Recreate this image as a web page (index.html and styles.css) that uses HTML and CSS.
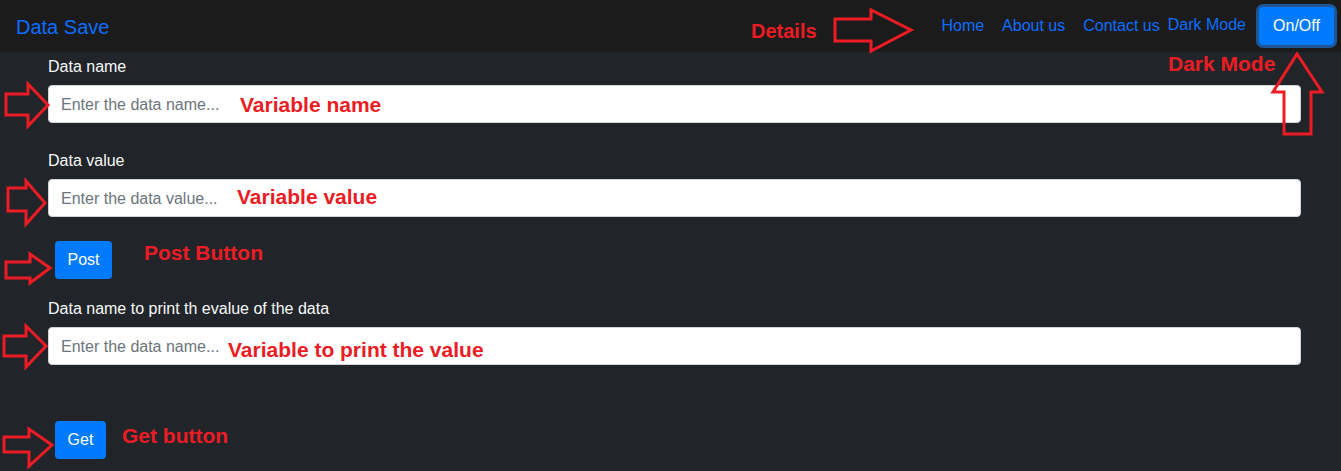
FILE: index.html
```html
<!DOCTYPE html>
<html lang="en">
<head>
<meta charset="utf-8">
<title>Data Save</title>
<link rel="stylesheet" href="styles.css">
</head>
<body>
<nav class="navbar">
  <a class="brand" href="#">Data Save</a>
  <ul class="nav">
    <li><a class="nav-link" href="#">Home</a></li>
    <li><a class="nav-link" href="#">About us</a></li>
    <li><a class="nav-link" href="#">Contact us</a></li>
  </ul>
  <span class="mode-label">Dark Mode</span>
  <button class="btn btn-toggle" type="button">On/Off</button>
</nav>

<main class="content">
  <div class="group">
    <label class="label" for="name">Data name</label>
    <input class="input" id="name" type="text" placeholder="Enter the data name...">
  </div>
  <div class="group">
    <label class="label" for="value">Data value</label>
    <input class="input" id="value" type="text" placeholder="Enter the data value...">
  </div>
  <button class="btn btn-post" type="button">Post</button>
  <div class="group group-get">
    <label class="label" for="print">Data name to print th evalue of the data</label>
    <input class="input" id="print" type="text" placeholder="Enter the data name...">
  </div>
  <button class="btn btn-get" type="button">Get</button>
</main>

<div class="annotations" aria-hidden="true">
  <svg class="arrows" width="1341" height="471" viewBox="0 0 1341 471">
    <g fill="none" stroke="#ed1c24" stroke-width="3" stroke-linejoin="miter">
      <polygon points="835,19 871,19 871,10 911,30 871,51 871,41 835,41"/>
      <polygon points="1297,54 1322,92 1311,92 1311,134 1284,134 1284,92 1273,92"/>
      <polygon points="6,94 28,94 28,84 48,105 28,126 28,115 6,115"/>
      <polygon points="8,188 26,188 26,181 45,203 26,224 26,211 8,211"/>
      <polygon points="6,262 30,262 30,254 50,268 30,283 30,278 6,278"/>
      <polygon points="4,336 26,336 26,326 46,346 26,367 26,356 4,356"/>
      <polygon points="4,437 29,437 29,429 52,445 29,466 29,452 4,452"/>
    </g>
  </svg>
  <span class="note note-details">Details</span>
  <span class="note note-dark">Dark Mode</span>
  <span class="note note-name">Variable name</span>
  <span class="note note-value">Variable value</span>
  <span class="note note-post">Post Button</span>
  <span class="note note-print">Variable to print the value</span>
  <span class="note note-get">Get button</span>
</div>
</body>
</html>
```

FILE: styles.css
```css
* {
  box-sizing: border-box;
}

html, body {
  margin: 0;
  padding: 0;
}

body {
  position: relative;
  width: 1341px;
  height: 471px;
  overflow: hidden;
  background: #212529;
  color: #f8f9fa;
  font-family: "Liberation Sans", Arial, sans-serif;
  font-size: 16px;
  line-height: 24px;
}

.navbar {
  display: flex;
  align-items: center;
  height: 52px;
  padding: 0 7px 0 16px;
  background: #1b1b1b;
}

.brand {
  color: #0d6efd;
  font-size: 20px;
  line-height: 30px;
  text-decoration: none;
  margin-top: 2px;
}

.nav {
  display: flex;
  list-style: none;
  margin: 0 0 0 auto;
  padding: 0;
  gap: 2px;
}

.nav-link {
  display: block;
  padding: 0 8px;
  color: #0d6efd;
  text-decoration: none;
}

.mode-label {
  color: #0d6efd;
  margin: 0 13px 2px 0;
}

.btn {
  display: inline-block;
  height: 38px;
  padding: 6px 12px;
  border: 0;
  border-radius: 4px;
  background: #007bff;
  color: #fff;
  font-family: inherit;
  font-size: 16px;
  line-height: 24px;
  cursor: pointer;
}

.btn-toggle {
  width: 75px;
  box-shadow: 0 0 0 3px #1d5595;
}

.content {
  display: flex;
  flex-direction: column;
  align-items: flex-start;
  padding: 1px 40px 0 48px;
}

.group {
  width: 100%;
  margin-bottom: 24px;
}

.group-get {
  margin: 16px 0 56px;
}

.label {
  display: block;
  padding-top: 2px;
  margin-bottom: 6px;
  color: #f8f9fa;
  font-size: 16px;
}

.input {
  display: block;
  width: 100%;
  height: 38px;
  padding: 7px 12px 5px;
  border: 1px solid #ced4da;
  border-radius: 4px;
  background: #fff;
  color: #212529;
  font-family: inherit;
  font-size: 16px;
}

.input::placeholder {
  color: #6c757d;
}

.btn-post,
.btn-get {
  margin-left: 7px;
}

.btn-post {
  width: 57px;
  padding: 6px 0;
}

.btn-get {
  width: 51px;
  padding: 6px 0;
}

/* annotation overlay */
.annotations {
  position: absolute;
  inset: 0;
  pointer-events: none;
}

.arrows {
  position: absolute;
  left: 0;
  top: 0;
}

.note {
  position: absolute;
  color: #ed1c24;
  font-family: "Liberation Sans", Arial, sans-serif;
  font-weight: bold;
  font-size: 21px;
  line-height: 24px;
  white-space: nowrap;
}

.note-details { left: 751px; top: 19px; font-size: 20px; }
.note-dark { left: 1168px; top: 52px; }
.note-name { left: 240px; top: 93px; }
.note-value { left: 237px; top: 185px; }
.note-post { left: 144px; top: 241px; }
.note-print { left: 228px; top: 338px; }
.note-get { left: 122px; top: 424px; }
```
